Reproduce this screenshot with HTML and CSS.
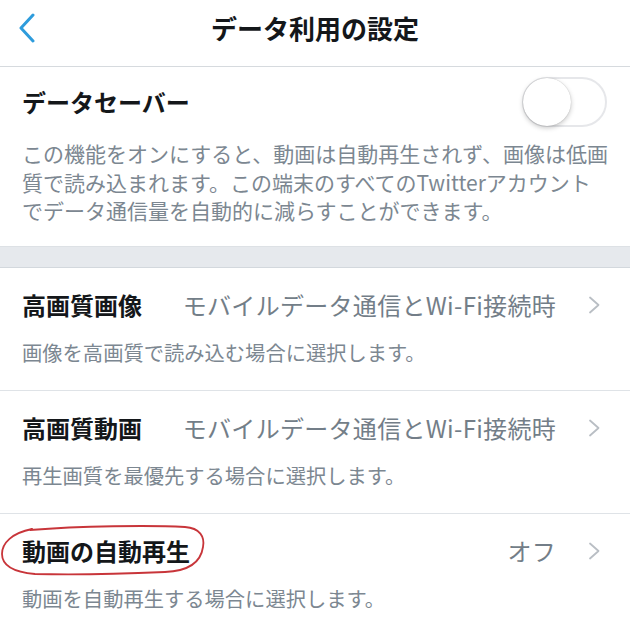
FILE: index.html
```html
<!DOCTYPE html>
<html lang="ja">
<head>
<meta charset="utf-8">
<title>データ利用の設定</title>
<link rel="stylesheet" href="styles.css">
</head>
<body>
<div class="screen">
  <header class="nav">
    <div class="nav-back">
      <svg width="18" height="30" viewBox="0 0 18 30"><path d="M15 2 L3 15 L15 28" fill="none" stroke="#2e9cdc" stroke-width="3" stroke-linecap="round" stroke-linejoin="round"/></svg>
    </div>
    <h1 class="nav-title">データ利用の設定</h1>
    <div></div>
  </header>

  <section class="saver">
    <div class="saver-row">
      <div class="saver-title">データセーバー</div>
      <div class="toggle"><div class="knob"></div></div>
    </div>
    <p class="saver-desc">この機能をオンにすると、動画は自動再生されず、画像は低画<br>質で読み込まれます。この端末のすべてのTwitterアカウント<br>でデータ通信量を自動的に減らすことができます。</p>
  </section>

  <div class="band"></div>

  <section class="list">
    <div class="item">
      <div class="item-main">
        <div class="item-title">高画質画像</div>
        <div class="item-value">モバイルデータ通信とWi-Fi接続時</div>
        <svg class="chev" width="12" height="18" viewBox="0 0 12 18"><path d="M2 1.5 L10.5 9 L2 16.5" fill="none" stroke="#b9bec4" stroke-width="1.8" stroke-linecap="round" stroke-linejoin="round"/></svg>
      </div>
      <div class="item-desc">画像を高画質で読み込む場合に選択します。</div>
    </div>
    <div class="item">
      <div class="item-main">
        <div class="item-title">高画質動画</div>
        <div class="item-value">モバイルデータ通信とWi-Fi接続時</div>
        <svg class="chev" width="12" height="18" viewBox="0 0 12 18"><path d="M2 1.5 L10.5 9 L2 16.5" fill="none" stroke="#b9bec4" stroke-width="1.8" stroke-linecap="round" stroke-linejoin="round"/></svg>
      </div>
      <div class="item-desc">再生画質を最優先する場合に選択します。</div>
    </div>
    <div class="item">
      <div class="item-main">
        <div class="item-title marked">動画の自動再生
          <svg class="circle-mark" width="215" height="60" viewBox="0 0 215 60"><path d="M30 9 C80 5, 150 4, 185 6 C200 7, 205 16, 203 26 C201 40, 190 50, 165 51 C120 53, 70 54, 35 53 C12 51, 2 44, 2 33 C2 22, 12 12, 32 8" fill="none" stroke="#c8353a" stroke-width="1.8" stroke-linecap="round"/></svg>
        </div>
        <div class="item-value">オフ</div>
        <svg class="chev" width="12" height="18" viewBox="0 0 12 18"><path d="M2 1.5 L10.5 9 L2 16.5" fill="none" stroke="#b9bec4" stroke-width="1.8" stroke-linecap="round" stroke-linejoin="round"/></svg>
      </div>
      <div class="item-desc">動画を自動再生する場合に選択します。</div>
    </div>
  </section>
</div>
</body>
</html>
```

FILE: styles.css
```css
* { box-sizing: border-box; }
html, body { margin: 0; padding: 0; background: #ffffff; }
body {
  font-family: "Noto Sans CJK JP", "Noto Sans", sans-serif;
  color: #14171a;
}
.screen { width: 630px; height: 630px; overflow: hidden; }

.nav {
  height: 67px;
  border-bottom: 1px solid #d6dade;
  display: grid;
  grid-template-columns: 80px 1fr 80px;
  align-items: start;
}
.nav-back { padding: 13px 0 0 18px; }
.nav-back svg { display: block; }
.nav-title {
  margin: 0;
  padding-top: 9px;
  text-align: center;
  font-size: 26px;
  line-height: 38px;
  font-weight: 700;
  color: #14171a;
}

.saver { padding: 10px 23px 21px 22px; }
.saver-row {
  display: flex;
  align-items: center;
  justify-content: space-between;
  height: 50px;
}
.saver-title { font-size: 24px; font-weight: 700; line-height: 32px; }
.toggle {
  width: 85px;
  height: 50px;
  border-radius: 25px;
  border: 2px solid #e6e7ea;
  background: #fff;
  position: relative;
}
.knob {
  position: absolute;
  left: -1px;
  top: -1px;
  width: 48px;
  height: 48px;
  border-radius: 50%;
  background: #fff;
  box-shadow: 0 2px 5px rgba(0,0,0,0.22), 0 0 1px rgba(0,0,0,0.25);
}
.saver-desc {
  margin: 12px 0 0 0;
  font-size: 21px;
  line-height: 28.5px;
  color: #7c8791;
  white-space: nowrap;
}

.band {
  height: 22px;
  background: #e6e9ed;
  border-top: 1px solid #dde1e5;
  border-bottom: 1px solid #d3d8dd;
}

.item { padding: 22px 0 0 22px; }
.item + .item { border-top: 1px solid #dfe3e7; }
.item-main {
  display: flex;
  align-items: center;
  height: 30px;
  padding-right: 30px;
}
.item-title {
  font-size: 24px;
  font-weight: 700;
  line-height: 30px;
  white-space: nowrap;
}
.marked { position: relative; }
.circle-mark {
  position: absolute;
  left: -22px;
  top: -15px;
}
.item-value {
  margin-left: auto;
  font-size: 24px;
  letter-spacing: 0.3px;
  line-height: 30px;
  color: #737e88;
  white-space: nowrap;
}
.chev { margin-left: 32px; display: block; flex: none; }
.item-desc {
  margin-top: 18px;
  padding-bottom: 24px;
  font-size: 20.3px;
  line-height: 28px;
  color: #7c8791;
}
```
